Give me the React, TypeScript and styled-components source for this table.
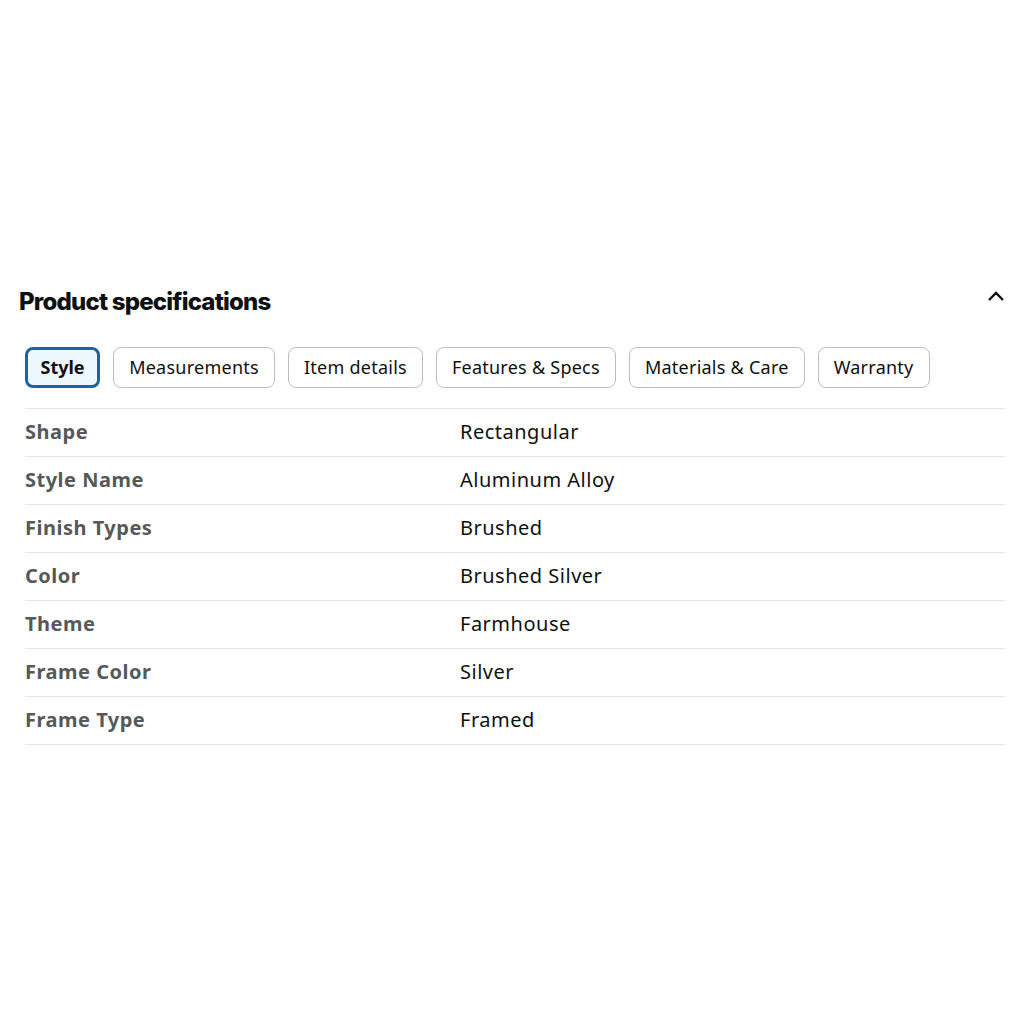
import React, { useState } from 'react';
import styled, { createGlobalStyle } from 'styled-components';

const GlobalStyle = createGlobalStyle`
  body {
    margin: 0;
    background: #fff;
    font-family: "Noto Sans", "Open Sans", sans-serif;
    color: #0f1111;
  }
`;

const Page = styled.div`
  padding: 286px 19px 0 19px;
`;

const Header = styled.div`
  display: flex;
  align-items: center;
  justify-content: space-between;
  height: 32px;
`;

const Title = styled.h2`
  margin: 0;
  font-family: Inter, "Noto Sans", sans-serif;
  font-size: 24px;
  font-weight: 800;
  letter-spacing: -0.8px;
  line-height: 32px;
  color: #0f1111;
`;

const Toggle = styled.button`
  border: 0;
  background: none;
  padding: 0;
  width: 18px;
  height: 12px;
  display: flex;
  margin-top: -12px;
`;

const Tabs = styled.div`
  display: flex;
  gap: 13px;
  margin: 29px 0 0 6px;
`;

const Tab = styled.button<{ $active?: boolean }>`
  height: 41px;
  box-sizing: border-box;
  padding: 0 ${p => (p.$active ? 12.5 : 15)}px 2px;
  border-radius: 8px;
  border: ${p => (p.$active ? '3px solid #2162a1' : '1px solid #bbbfbf')};
  background: ${p => (p.$active ? '#edf8fc' : '#fff')};
  font-family: "Noto Sans", sans-serif;
  font-size: 18px;
  letter-spacing: ${p => (p.$active ? 0 : 0.25)}px;
  font-weight: ${p => (p.$active ? 700 : 400)};
  color: #0f1111;
  cursor: pointer;
`;

const Table = styled.div`
  margin: 20px 0 0 6px;
  border-top: 1px solid #e3e6e6;
`;

const Row = styled.div`
  display: grid;
  grid-template-columns: 435px 1fr;
  align-items: center;
  height: 48px;
  box-sizing: border-box;
  border-bottom: 1px solid #e3e6e6;
  font-size: 20px;
  letter-spacing: 0.5px;
  padding-bottom: 2px;
`;

const Label = styled.span`
  font-weight: 700;
  color: #565959;
`;

const Value = styled.span`
  color: #0f1111;
`;

const TABS = [
  'Style',
  'Measurements',
  'Item details',
  'Features & Specs',
  'Materials & Care',
  'Warranty',
];

const SPECS: [string, string][] = [
  ['Shape', 'Rectangular'],
  ['Style Name', 'Aluminum Alloy'],
  ['Finish Types', 'Brushed'],
  ['Color', 'Brushed Silver'],
  ['Theme', 'Farmhouse'],
  ['Frame Color', 'Silver'],
  ['Frame Type', 'Framed'],
];

const App: React.FC = () => {
  const [active, setActive] = useState(0);

  return (
    <Page>
      <GlobalStyle />
      <Header>
        <Title>Product specifications</Title>
        <Toggle aria-label="collapse">
          <svg width="18" height="12" viewBox="0 0 18 12">
            <polyline
              points="2,10 9,3 16,10"
              fill="none"
              stroke="#0f1111"
              strokeWidth="2.4"
            />
          </svg>
        </Toggle>
      </Header>
      <Tabs>
        {TABS.map((t, i) => (
          <Tab key={t} $active={i === active} onClick={() => setActive(i)}>
            {t}
          </Tab>
        ))}
      </Tabs>
      <Table>
        {SPECS.map(([k, v]) => (
          <Row key={k}>
            <Label>{k}</Label>
            <Value>{v}</Value>
          </Row>
        ))}
      </Table>
    </Page>
  );
};

export default App;
